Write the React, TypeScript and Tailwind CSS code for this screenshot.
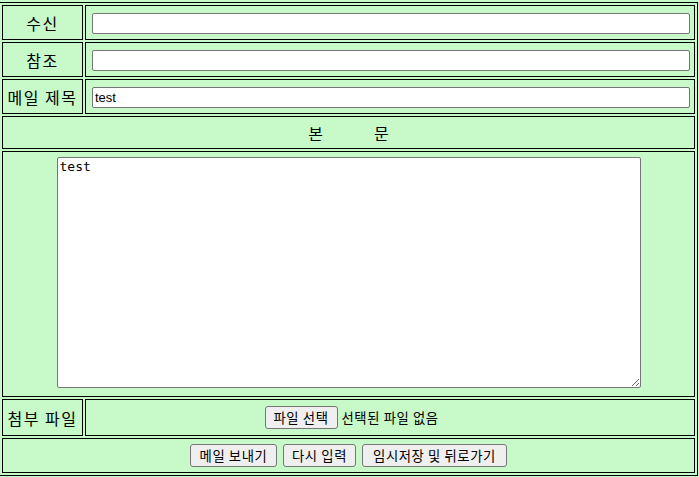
const font = {
  fontFamily: '"Noto Sans CJK KR", "Liberation Sans", sans-serif',
};

function LabelCell({ children }: { children: React.ReactNode }) {
  return (
    <div className="flex w-[81px] shrink-0 items-center justify-center border border-black text-[16px] tracking-[1.5px] text-black">
      {children}
    </div>
  );
}

function TextInput({ value = '' }: { value?: string }) {
  return (
    <input
      type="text"
      defaultValue={value}
      className="ml-[6px] h-[21px] w-[598px] rounded-[2px] border border-[#767676] bg-white px-[2px] text-[13px] text-black outline-none"
      style={{ fontFamily: '"Liberation Sans", Arial, sans-serif' }}
    />
  );
}

function Button({ label, width }: { label: string; width: string }) {
  return (
    <button
      className={`flex h-[23px] ${width} items-center justify-center rounded-[3px] border border-[#767676] bg-[#efefef] text-[13.33px] tracking-[0.6px] text-black`}
    >
      {label}
    </button>
  );
}

export default function App() {
  return (
    <div
      className="h-[477px] w-[699px] overflow-hidden bg-[#c8f9c8] pt-[2px]"
      style={font}
    >
      <div className="-ml-px flex h-[474px] w-[699px] flex-col gap-[2px] border border-black p-[2px]">
        <div className="flex h-[35px] gap-[2px]">
          <LabelCell>수신</LabelCell>
          <div className="flex flex-1 items-center border border-black pt-px">
            <TextInput />
          </div>
        </div>
        <div className="flex h-[35px] gap-[2px]">
          <LabelCell>참조</LabelCell>
          <div className="flex flex-1 items-center border border-black pt-px">
            <TextInput />
          </div>
        </div>
        <div className="flex h-[35px] gap-[2px]">
          <LabelCell>메일 제목</LabelCell>
          <div className="flex flex-1 items-center border border-black pt-px">
            <TextInput value="test" />
          </div>
        </div>
        <div className="flex h-[33px] items-center justify-center gap-[51px] border border-black text-[16px] text-black">
          <span>본</span>
          <span>문</span>
        </div>
        <div className="flex h-[246px] justify-center border border-black pt-[5px]">
          <textarea
            defaultValue="test"
            className="h-[231px] w-[584px] rounded-[2px] border border-[#767676] bg-white px-[2px] py-px text-[13px] leading-[15px] text-black outline-none"
            style={{ fontFamily: '"DejaVu Sans Mono", "Liberation Mono", monospace' }}
          />
        </div>
        <div className="flex h-[37px] gap-[2px]">
          <LabelCell>첨부 파일</LabelCell>
          <div className="flex flex-1 items-center justify-center border border-black">
            <div className="flex w-[251px] items-center gap-[4px] text-[13.33px] tracking-[0.6px] text-black">
              <Button label="파일 선택" width="w-[73px]" />
              <span>선택된 파일 없음</span>
            </div>
          </div>
        </div>
        <div className="flex h-[35px] items-center justify-center gap-[6px] border border-black">
          <Button label="메일 보내기" width="w-[87px]" />
          <Button label="다시 입력" width="w-[73px]" />
          <Button label="임시저장 및 뒤로가기" width="w-[145px]" />
        </div>
      </div>
    </div>
  );
}
